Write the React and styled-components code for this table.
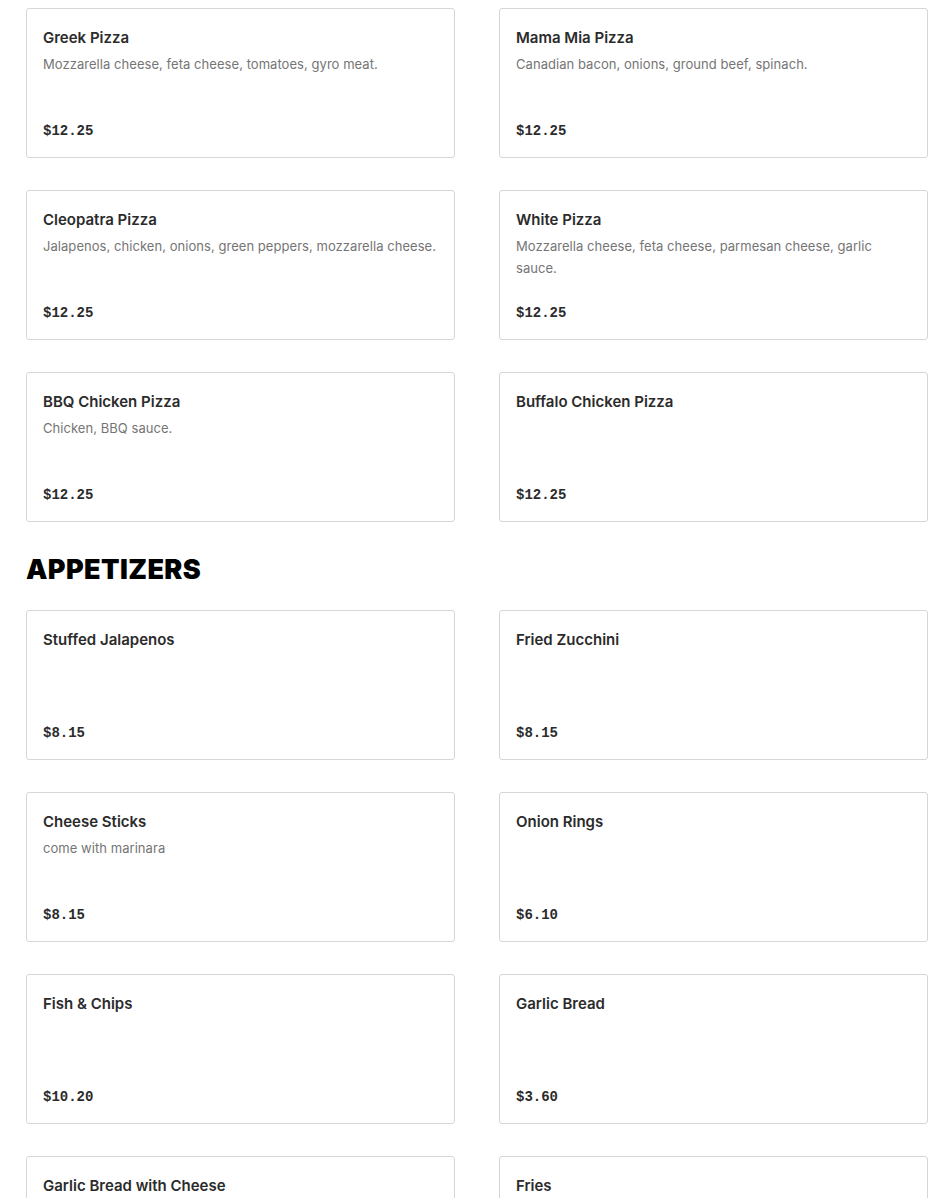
import styled, { createGlobalStyle } from "styled-components";

const GlobalStyle = createGlobalStyle`
  body {
    margin: 0;
    background: #fff;
    font-family: Inter, "Noto Sans", sans-serif;
  }
`;

const Page = styled.div`
  padding: 8px 22px 40px 26px;
  box-sizing: border-box;
  width: 950px;
`;

const Grid = styled.div`
  display: grid;
  grid-template-columns: 429px 429px;
  column-gap: 44px;
  row-gap: 32px;
`;

const SectionTitle = styled.h2`
  margin: 32px 0 24px;
  font-family: Inter, sans-serif;
  font-weight: 900;
  font-size: 27px;
  line-height: 32px;
  letter-spacing: 0.4px;
  color: #000;
`;

const Card = styled.div`
  display: flex;
  flex-direction: column;
  height: 150px;
  box-sizing: border-box;
  padding: 17px 16px 16px 16px;
  border: 1px solid #d6d6d6;
  border-radius: 3px;
  background: #fff;
`;

const Name = styled.div`
  font-size: 15px;
  font-weight: 600;
  line-height: 24px;
  color: #2b2b2b;
  margin-bottom: 3px;
`;

const Desc = styled.div`
  font-size: 13px;
  line-height: 22px;
  color: #757575;
  letter-spacing: 0.05px;
`;

const Price = styled.div`
  margin-top: auto;
  font-family: "Liberation Mono", "DejaVu Sans Mono", monospace;
  font-weight: 700;
  font-size: 14px;
  line-height: 20px;
  color: #2b2b2b;
`;

const pizzas = [
  { name: "Greek Pizza", desc: "Mozzarella cheese, feta cheese, tomatoes, gyro meat.", price: "$12.25" },
  { name: "Mama Mia Pizza", desc: "Canadian bacon, onions, ground beef, spinach.", price: "$12.25" },
  { name: "Cleopatra Pizza", desc: "Jalapenos, chicken, onions, green peppers, mozzarella cheese.", price: "$12.25" },
  { name: "White Pizza", desc: "Mozzarella cheese, feta cheese, parmesan cheese, garlic sauce.", price: "$12.25" },
  { name: "BBQ Chicken Pizza", desc: "Chicken, BBQ sauce.", price: "$12.25" },
  { name: "Buffalo Chicken Pizza", desc: "", price: "$12.25" },
];

const appetizers = [
  { name: "Stuffed Jalapenos", desc: "", price: "$8.15" },
  { name: "Fried Zucchini", desc: "", price: "$8.15" },
  { name: "Cheese Sticks", desc: "come with marinara", price: "$8.15" },
  { name: "Onion Rings", desc: "", price: "$6.10" },
  { name: "Fish & Chips", desc: "", price: "$10.20" },
  { name: "Garlic Bread", desc: "", price: "$3.60" },
  { name: "Garlic Bread with Cheese", desc: "", price: "$4.70" },
  { name: "Fries", desc: "", price: "$3.60" },
];

const MenuCard = ({ item }) => (
  <Card>
    <Name>{item.name}</Name>
    {item.desc && <Desc>{item.desc}</Desc>}
    <Price>{item.price}</Price>
  </Card>
);

const App = () => {
  return (
    <Page>
      <GlobalStyle />
      <Grid>
        {pizzas.map((p) => (
          <MenuCard key={p.name} item={p} />
        ))}
      </Grid>
      <SectionTitle>APPETIZERS</SectionTitle>
      <Grid>
        {appetizers.map((p) => (
          <MenuCard key={p.name} item={p} />
        ))}
      </Grid>
    </Page>
  );
};

export default App;
